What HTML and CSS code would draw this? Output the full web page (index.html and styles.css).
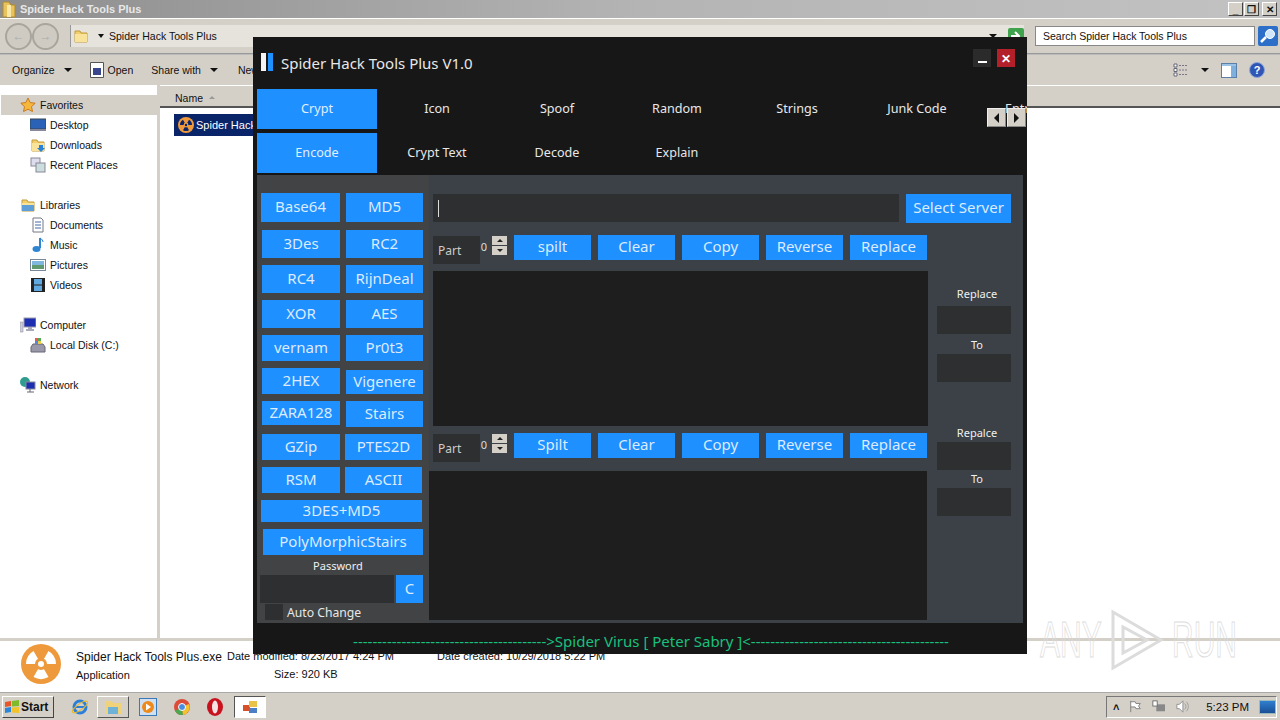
FILE: index.html
```html
<!DOCTYPE html>
<html lang="en">
  <head>
    <meta charset="UTF-8" />
    <meta name="viewport" content="width=device-width, initial-scale=1.0" />
    <title>Spider Hack Tools Plus</title>
    <link rel="stylesheet" href="styles.css">
  </head>
  <body>
    <svg class="defs" width="0" height="0">
      <symbol id="folder" viewBox="0 0 16 16"><path d="M2 3h5l1 2h6v9H2z" fill="#f2cf6a" stroke="#c19a3a"/><path d="M2 6h12v8H2z" fill="#f9e39a"/></symbol>
      <symbol id="radiation" viewBox="0 0 40 40"><circle cx="20" cy="20" r="20" fill="#ee9a3c"/><path class="rad-cut" d="M20 20 27.500 7A15 15 0 0 1 35 20zM20 20 5 20A15 15 0 0 1 12.500 7zM20 20 27.500 33A15 15 0 0 1 12.500 33z"/><circle cx="20" cy="20" r="6" fill="#ee9a3c"/><circle class="rad-cut" cx="20" cy="20" r="3"/></symbol>
    </svg>

    <div class="explorer">
      <header class="caption">
        <svg class="caption__icon" width="14" height="17" viewBox="0 0 14 17"><path d="M1 1h6l2 3h4v12H1z" fill="#e8c25a" stroke="#b08a30"/><path d="M5 4h4v12H5z" fill="#f8e9a8"/></svg>
        <span class="caption__title">Spider Hack Tools Plus</span>
        <div class="caption__btns">
          <span class="capbtn">_</span>
          <span class="capbtn">&#10064;</span>
          <span class="capbtn capbtn--close">&#10005;</span>
        </div>
      </header>

      <div class="addressbar">
        <span class="navbtn">&#8592;</span>
        <span class="navbtn navbtn--next">&#8594;</span>
        <div class="address">
          <svg width="16" height="16"><use href="#folder"/></svg>
          <span class="address__arrow"></span>
          <span>Spider Hack Tools Plus</span>
          <span class="address__drop"></span>
          <svg class="address__go" width="18" height="18" viewBox="0 0 18 18"><rect x="1" y="1" width="16" height="16" rx="2" fill="#3fa34d"/><path d="M4 9h8M8 5l4 4-4 4" fill="none" stroke="#fff" stroke-width="2"/></svg>
        </div>
        <div class="search">Search Spider Hack Tools Plus</div>
        <svg class="search__btn" width="20" height="20" viewBox="0 0 20 20"><rect width="20" height="20" rx="2" fill="#2b6fc9"/><circle cx="12" cy="8" r="4.500" fill="#cfe6fb" stroke="#fff"/><path d="M8 11l-5 5" stroke="#fff" stroke-width="2.500"/></svg>
      </div>

      <nav class="toolbar">
        <span class="tool">Organize<i class="caret"></i></span>
        <span class="tool tool--open">
          <svg width="16" height="18" viewBox="0 0 16 18"><path d="M1.500 1.500h13v15h-13z" fill="#fff" stroke="#555"/><rect x="4" y="7" width="8" height="7" fill="#39458c"/></svg>
          Open
        </span>
        <span class="tool tool--share">Share with<i class="caret"></i></span>
        <span class="tool">New folder</span>
        <div class="toolbar__right">
          <svg width="16" height="14" viewBox="0 0 16 14"><path d="M1 1h3v3H1zM1 5.500h3v3H1zM1 10h3v3H1z" fill="#fff" stroke="#667"/><path d="M6 2.500h9M6 7h9M6 11.500h9" stroke="#778" stroke-dasharray="2 1"/></svg>
          <i class="caret caret--view"></i>
          <svg width="16" height="15" viewBox="0 0 16 15"><rect x=".5" y=".5" width="15" height="14" fill="#fff" stroke="#5b7fa8"/><rect x="1" y="1" width="14" height="2" fill="#9cc2e6"/><rect x="10" y="3" width="5" height="11" fill="#7fb0dd"/></svg>
          <svg width="16" height="16" viewBox="0 0 16 16"><circle cx="8" cy="8" r="7.500" fill="#2f55b5" stroke="#8ea6d8"/><text x="8" y="12" font-size="11" font-weight="700" text-anchor="middle" fill="#fff" font-family="Liberation Sans">?</text></svg>
        </div>
      </nav>

      <div class="browser">
        <aside class="sidebar">
          <div class="tree tree--top tree--active"><svg width="16" height="16" viewBox="0 0 16 16"><path d="M8 1l2.200 4.600 5 .6-3.700 3.400 1 5L8 12.200 3.500 14.600l1-5L.8 6.200l5-.6z" fill="#f5b73c" stroke="#cc7a1f"/></svg>Favorites</div>
          <div class="tree"><svg width="16" height="16" viewBox="0 0 16 16"><rect y="2" width="16" height="10" fill="#2a62b8" stroke="#345"/><rect y="12" width="16" height="2" fill="#889"/></svg>Desktop</div>
          <div class="tree"><svg width="16" height="16"><use href="#folder"/><path d="M9 8h4v3h2l-4 4-4-4h2z" fill="#2a82d8"/></svg>Downloads</div>
          <div class="tree"><svg width="16" height="16" viewBox="0 0 16 16"><rect x="1" y="1" width="9" height="8" fill="#dde" stroke="#889"/><rect x="6" y="6" width="9" height="9" fill="#cdd" stroke="#889"/></svg>Recent Places</div>
          <div class="tree tree--top tree--gap"><svg width="16" height="16"><use href="#folder"/><path d="M2 8h12v6H2z" fill="#5f9fd8"/></svg>Libraries</div>
          <div class="tree"><svg width="16" height="16" viewBox="0 0 16 16"><path d="M3 1h8l2 2v12H3z" fill="#fff" stroke="#778"/><path d="M5 5h6M5 8h6M5 11h6" stroke="#46a"/></svg>Documents</div>
          <div class="tree"><svg width="16" height="16" viewBox="0 0 16 16"><path d="M10 1v10" stroke="#2e86d0" stroke-width="2"/><path d="M10 1c2 1 3 3 3 4" fill="none" stroke="#2e86d0"/><ellipse cx="6.500" cy="12" rx="4" ry="3" fill="#2e86d0"/></svg>Music</div>
          <div class="tree"><svg width="16" height="16" viewBox="0 0 16 16"><rect x=".5" y="2.500" width="15" height="11" fill="#fff" stroke="#789"/><rect x="2" y="4" width="12" height="4" fill="#7fb8dc"/><rect x="2" y="8" width="12" height="4" fill="#5e9a6c"/></svg>Pictures</div>
          <div class="tree"><svg width="16" height="16" viewBox="0 0 16 16"><rect x="1" y="1" width="14" height="14" fill="#222"/><rect x="4" y="2" width="8" height="5.500" fill="#5fa8e0"/><rect x="4" y="8.500" width="8" height="5.500" fill="#5fa8e0"/></svg>Videos</div>
          <div class="tree tree--top tree--gap"><svg width="16" height="16" viewBox="0 0 16 16"><rect x="4" y="1" width="12" height="9" fill="#1d2fb0" stroke="#99a"/><path d="M8 10h4v2h2v2H6v-2h2z" fill="#aab"/><rect y="5" width="3" height="10" fill="#ccd" stroke="#889" stroke-width=".5"/></svg>Computer</div>
          <div class="tree"><svg width="16" height="16" viewBox="0 0 16 16"><path d="M1 10l2-3h10l2 3v5H1z" fill="#99a" stroke="#667"/><rect x="5" y="1" width="3" height="3" fill="#e55"/><rect x="8" y="1" width="3" height="3" fill="#5a5"/><rect x="5" y="4" width="3" height="3" fill="#58d"/><rect x="8" y="4" width="3" height="3" fill="#ec4"/></svg>Local Disk (C:)</div>
          <div class="tree tree--top tree--gap"><svg width="16" height="16" viewBox="0 0 16 16"><circle cx="5" cy="5" r="5" fill="#2f9c8f"/><rect x="6" y="5" width="9" height="7" fill="#1d2fb0" stroke="#889"/><path d="M10 12v3M7 15h7" stroke="#667"/></svg>Network</div>
        </aside>

        <main class="files">
          <div class="files__head"><span>Name</span><i class="sort"></i></div>
          <div class="file">
            <svg width="16" height="16"><use href="#radiation"/></svg>
            <span>Spider Hack Tools Plus.exe</span>
          </div>
        </main>
      </div>

      <footer class="details">
        <svg class="details__icon" width="40" height="40"><use href="#radiation"/></svg>
        <div class="details__name">
          <span class="details__big">Spider Hack Tools Plus.exe</span>
          <span>Application</span>
        </div>
        <div class="details__meta">
          <span>Date modified: 8/23/2017 4:24 PM</span>
          <span class="details__size">Size: 920 KB</span>
        </div>
        <span class="details__created">Date created: 10/29/2018 5:22 PM</span>
      </footer>

      <div class="taskbar">
        <span class="start">
          <svg width="16" height="14" viewBox="0 0 16 14"><path d="M1 2l6-1v5l-6 1z" fill="#e8562a"/><path d="M8 1l7-1v6l-7 .5z" fill="#7fba2a"/><path d="M1 8l6-1v5l-6 1z" fill="#2a86d8"/><path d="M8 7.500l7-.5v6l-7-.5z" fill="#f2c32a"/></svg>
          Start
        </span>
        <svg class="tb tb--ie" width="18" height="18" viewBox="0 0 18 18"><circle cx="9" cy="9" r="6" fill="none" stroke="#2c7fd8" stroke-width="3"/><path d="M3 9h12" stroke="#2c7fd8" stroke-width="2"/><ellipse cx="9" cy="9" rx="9" ry="3" fill="none" stroke="#e8b72a" transform="rotate(-35 9 9)"/></svg>
        <span class="tbbtn"><svg width="20" height="18" viewBox="0 0 20 18"><path d="M2 3h7l1 2h8v11H2z" fill="#f0d27a"/><path d="M5 9h10v7H5z" fill="#6fb2d8"/></svg></span>
        <svg class="tb tb--media" width="18" height="18" viewBox="0 0 18 18"><rect x=".5" y=".5" width="17" height="17" fill="#cfe0f2" stroke="#3a78b8"/><circle cx="9" cy="9" r="6" fill="#ee8a1c"/><path d="M7 5.500l5 3.500-5 3.500z" fill="#fff"/></svg>
        <svg class="tb tb--chrome" width="16" height="16" viewBox="0 0 16 16"><circle cx="8" cy="8" r="8" fill="#dd4b39"/><path d="M8 8L1 12a8 8 0 0 0 8 4z" fill="#4aa84f"/><path d="M8 8l7-3a8 8 0 0 1-6 11z" fill="#f3c32d"/><circle cx="8" cy="8" r="3.500" fill="#4a8de0" stroke="#fff"/></svg>
        <svg class="tb tb--opera" width="16" height="18" viewBox="0 0 16 18"><ellipse cx="8" cy="9" rx="8" ry="9" fill="#c8121e"/><ellipse cx="8" cy="9" rx="3" ry="6.500" fill="#f6e4e4"/></svg>
        <span class="tbbtn tbbtn--active"><svg width="14" height="14" viewBox="0 0 14 14"><rect y="5" width="7" height="6" fill="#d8502a"/><rect x="6" y="1" width="8" height="6" fill="#e8c34a"/><rect x="6" y="8" width="8" height="5" fill="#4a7fc8"/></svg></span>
        <div class="tray">
          <span class="tray__up">&#708;</span>
          <svg width="15" height="15" viewBox="0 0 15 15"><path d="M2 1v13M2 2h5l1 2h5l-2 3 2 3H8L7 8H2" fill="#fff" stroke="#777"/></svg>
          <svg width="16" height="15" viewBox="0 0 16 15"><rect x="5" y="5" width="10" height="8" fill="#888"/><rect x="1" y="1" width="5" height="6" fill="#fff" stroke="#666"/></svg>
          <svg width="16" height="15" viewBox="0 0 16 15"><path d="M1 5h3l4-4v13l-4-4H1z" fill="#fff" stroke="#888"/><path d="M10 4c2 2 2 5 0 7M12 2c3 3 3 8 0 11" fill="none" stroke="#999"/></svg>
          <span class="tray__time">5:23 PM</span>
          <span class="tray__desktop"></span>
        </div>
      </div>
    </div>

    <section class="app">
      <div class="app__title">
        <span class="logo"><i></i><i></i></span>
        <h1>Spider Hack Tools Plus V1.0</h1>
        <span class="winbtn winbtn--min"></span>
        <span class="winbtn winbtn--close">&#10005;</span>
      </div>

      <div class="tabs">
        <span class="tabs__item tabs__item--on">Crypt</span>
        <span class="tabs__item">Icon</span>
        <span class="tabs__item">Spoof</span>
        <span class="tabs__item">Random</span>
        <span class="tabs__item">Strings</span>
        <span class="tabs__item">Junk Code</span>
        <span class="tabs__item tabs__item--cut">Entry</span>
      </div>
      <div class="tabs tabs--sub">
        <span class="tabs__item tabs__item--on">Encode</span>
        <span class="tabs__item">Crypt Text</span>
        <span class="tabs__item">Decode</span>
        <span class="tabs__item">Explain</span>
      </div>
      <div class="scroller"><span class="scroller__left"></span><span class="scroller__right"></span></div>

      <div class="panel">
        <div class="algos">
          <div class="algos__grid">
            <span class="btn algos__top algos__first">Base64</span><span class="btn algos__top">MD5</span>
            <span class="btn">3Des</span><span class="btn">RC2</span>
            <span class="btn">RC4</span><span class="btn">RijnDeal</span>
            <span class="btn">XOR</span><span class="btn">AES</span>
            <span class="btn">vernam</span><span class="btn">Pr0t3</span>
            <span class="btn">2HEX</span><span class="btn algos__vig">Vigenere</span>
            <span class="btn algos__zara">ZARA128</span><span class="btn">Stairs</span>
            <span class="btn">GZip</span><span class="btn algos__shift">PTES2D</span>
            <span class="btn">RSM</span><span class="btn algos__shift">ASCII</span>
            <span class="btn algos__wide">3DES+MD5</span>
            <span class="btn algos__wide algos__poly">PolyMorphicStairs</span>
          </div>
          <div class="small-label algos__pass">Password</div>
          <div class="passrow">
            <span class="field passrow__input"></span>
            <span class="btn passrow__c">C</span>
          </div>
          <div class="check"><i></i>Auto Change</div>
        </div>

        <div class="work">
          <div class="server">
            <span class="field server__input"><i></i></span>
            <span class="btn server__btn">Select Server</span>
          </div>
          <div class="work__body">
            <div class="work__center">
              <div class="actions">
                <div class="part"><span class="part__label">Part</span><span class="part__num">0</span><span class="spin"><i></i><i class="down"></i></span></div>
                <span class="btn">spilt</span><span class="btn">Clear</span><span class="btn">Copy</span><span class="btn">Reverse</span><span class="btn">Replace</span>
              </div>
              <div class="text text--top"></div>
              <div class="actions actions--low">
                <div class="part"><span class="part__label">Part</span><span class="part__num">0</span><span class="spin"><i></i><i class="down"></i></span></div>
                <span class="btn">Spilt</span><span class="btn">Clear</span><span class="btn">Copy</span><span class="btn">Reverse</span><span class="btn">Replace</span>
              </div>
              <div class="text text--bottom"></div>
            </div>
            <div class="side">
              <div class="small-label">Replace</div>
              <span class="field side__input side__input--first"></span>
              <div class="small-label side__to">To</div>
              <span class="field side__input"></span>
              <div class="small-label side__second">Repalce</div>
              <span class="field side__input"></span>
              <div class="small-label side__to side__to--low">To</div>
              <span class="field side__input"></span>
            </div>
          </div>
        </div>
      </div>

      <div class="app__foot">----------------------------------------&gt;Spider Virus [ Peter Sabry ]&lt;-----------------------------------------</div>
    </section>

    <div class="watermark">
      <span>ANY</span>
      <svg width="54" height="62" viewBox="0 0 54 62"><path d="M3 3v56l48-28z M13 18v26l24-13z" fill="none" stroke="#dcdcdc" stroke-width="3"/></svg>
      <span>RUN</span>
    </div>
  </body>
</html>
```

FILE: styles.css
```css
:root {
  --blue: #1e90ff;
  --win: #d4d0c8;
  --dark: #171717;
  --panel: #3b4146;
  --field: #2d2f31;
}
*,
*::before,
*::after {
  box-sizing: border-box;
}
body {
  margin: 0;
  width: 1280px;
  height: 720px;
  overflow: hidden;
  position: relative;
  font-family: "Liberation Sans", sans-serif;
  font-size: 11px;
  color: #111;
  background: #fff;
}
.defs {
  position: absolute;
}
.rad-cut {
  fill: var(--cut, #fff);
}

/* Explorer behind the app */
.explorer {
  display: flex;
  flex-direction: column;
  height: 720px;
}
.caption {
  display: flex;
  align-items: center;
  height: 18px;
  padding-left: 2px;
  background: linear-gradient(90deg, #8e8e8e, #b4b4b4 50%, #c2c2c2);
}
.caption__title {
  margin-left: 4px;
  font-weight: 700;
  color: #e8e8e8;
}
.caption__btns {
  display: flex;
  margin-left: auto;
  margin-right: 3px;
  gap: 1px;
}
.capbtn {
  display: flex;
  align-items: center;
  justify-content: center;
  width: 15px;
  height: 14px;
  font-size: 10px;
  font-weight: 700;
  background: var(--win);
  border: 1px solid;
  border-color: #fff #444 #444 #fff;
}
.capbtn--close {
  margin-left: 2px;
}

.addressbar {
  display: flex;
  align-items: center;
  height: 36px;
  padding: 0 2px 0 5px;
  font-size: 10.5px;
  background: var(--win);
  border-top: 1px solid #fff;
  border-bottom: 1px solid #999;
}
.navbtn {
  display: flex;
  align-items: center;
  justify-content: center;
  width: 27px;
  height: 27px;
  border-radius: 50%;
  color: #aaa;
  font-size: 12px;
  background: #cfcbc3;
  border: 2px solid #a8a59d;
}
.address {
  display: flex;
  align-items: center;
  flex: none;
  width: 954px;
  height: 22px;
  margin-left: 11px;
  padding-left: 2px;
  background: #e6e3dc;
  border-left: 1px solid #999;
}
.address__arrow {
  margin: 0 5px 0 9px;
  border-top: 4px solid #111;
  border-left: 3px solid transparent;
  border-right: 3px solid transparent;
}
.address__drop {
  margin-left: auto;
  margin-right: 10px;
  border-top: 4px solid #111;
  border-left: 4px solid transparent;
  border-right: 4px solid transparent;
}
.address__go {
  margin-right: -1px;
}
.search {
  display: flex;
  align-items: center;
  width: 220px;
  height: 20px;
  margin-left: 11px;
  padding-left: 7px;
  background: #fff;
  border: 1px solid #888;
}
.search__btn {
  margin-left: 3px;
}

.toolbar {
  display: flex;
  align-items: center;
  height: 31px;
  padding-left: 12px;
  font-size: 10.5px;
  background: var(--win);
  border-top: 1px solid #bbb;
}
.tool {
  display: flex;
  align-items: center;
  margin-right: 18px;
  gap: 3px;
}
.tool--open {
  margin-left: -1px;
}
.tool--share {
  margin-right: 20px;
}
.caret {
  display: inline-block;
  margin-left: 6px;
  border-top: 4px solid #111;
  border-left: 4px solid transparent;
  border-right: 4px solid transparent;
}
.toolbar__right {
  display: flex;
  align-items: center;
  margin-left: auto;
  margin-right: 15px;
  gap: 12px;
}
.caret--view {
  margin: 0;
}

.browser {
  display: flex;
  flex: 1;
  min-height: 0;
}
.sidebar {
  width: 160px;
  padding-top: 10px;
  font-size: 10.5px;
  border-right: 3px solid var(--win);
  background: #fff;
}
.tree {
  display: flex;
  align-items: center;
  height: 20px;
  padding-left: 30px;
  gap: 4px;
}
.tree--top {
  padding-left: 20px;
}
.tree--gap {
  margin-top: 20px;
}
.tree--active {
  margin-left: 1px;
  padding-left: 19px;
  background: var(--win);
}
.files {
  flex: 1;
}
.files__head {
  display: flex;
  align-items: center;
  height: 23px;
  padding: 3px 0 0 15px;
  gap: 6px;
  font-size: 10.5px;
  background: var(--win);
  border-bottom: 2px solid #555;
  border-top: 1px solid #fff;
}
.sort {
  border-bottom: 3px solid #999;
  border-left: 3px solid transparent;
  border-right: 3px solid transparent;
}
.file {
  --cut: #0a246a;
  display: flex;
  align-items: center;
  width: 160px;
  height: 22px;
  margin: 6px 0 0 14px;
  padding-left: 4px;
  gap: 2px;
  color: #fff;
  background: #0a246a;
}

.details {
  display: flex;
  height: 54px;
  border-top: 3px solid var(--win);
  background: #fff;
}
.details__icon {
  margin: 3px 0 0 21px;
}
.details__name {
  display: flex;
  flex-direction: column;
  gap: 5px;
  width: 151px;
  margin: 9px 0 0 15px;
}
.details__big {
  font-size: 12px;
}
.details__meta {
  display: flex;
  flex-direction: column;
  gap: 6px;
  width: 210px;
  margin-top: 9px;
}
.details__size {
  margin-left: 47px;
}
.details__created {
  margin-top: 9px;
}

.taskbar {
  display: flex;
  align-items: center;
  height: 28px;
  padding-left: 2px;
  background: var(--win);
  border-top: 1px solid #aaa;
}
.start {
  display: flex;
  align-items: center;
  gap: 1px;
  width: 52px;
  height: 22px;
  padding-left: 1px;
  font-size: 12px;
  font-weight: 700;
  border: 1px solid;
  border-color: #fff #444 #444 #fff;
}
.tb--ie {
  margin-left: 17px;
}
.tbbtn {
  display: flex;
  align-items: center;
  justify-content: center;
  width: 32px;
  height: 22px;
  margin-left: 8px;
  border: 1px solid;
  border-color: #fff #555 #555 #fff;
}
.tb--media {
  margin-left: 10px;
}
.tb--chrome {
  margin-left: 17px;
}
.tb--opera {
  margin-left: 17px;
}
.tbbtn--active {
  margin-left: 11px;
  background: #fff;
  border-color: #555 #fff #fff #555;
}
.tray {
  display: flex;
  align-items: center;
  margin-left: auto;
  margin-right: 3px;
  width: 171px;
  height: 22px;
  padding-left: 6px;
  gap: 10px;
  border: 1px solid;
  border-color: #777 #fff #fff #777;
}
.tray__up {
  font-size: 11px;
  font-weight: 700;
}
.tray__time {
  flex: none;
  margin-left: 6px;
  font-size: 11.5px;
  white-space: nowrap;
}
.tray__desktop {
  flex: none;
  width: 17px;
  height: 14px;
  background: linear-gradient(#2f7fd0, #1b4f96);
  border: 1px solid #9bb;
}

/* The app window floating over explorer */
.app {
  position: absolute;
  left: 253px;
  top: 37px;
  width: 774px;
  height: 617px;
  display: flex;
  flex-direction: column;
  color: #e8e8e8;
  font-family: "Noto Sans", sans-serif;
  background: var(--dark);
}
.app__title {
  display: flex;
  align-items: center;
  height: 52px;
  padding: 0 12px 0 8px;
}
.logo {
  display: flex;
  gap: 2px;
  margin-right: 8px;
  margin-top: -2px;
}
.logo i {
  width: 5px;
  height: 18px;
  background: #f4f4f4;
}
.logo i + i {
  background: var(--blue);
}
.app__title h1 {
  flex: 1;
  margin: 0;
  font-size: 15px;
  font-weight: 400;
}
.winbtn {
  display: flex;
  align-self: flex-start;
  align-items: center;
  justify-content: center;
  width: 18px;
  height: 18px;
  margin-left: 6px;
  margin-top: 12px;
  font-size: 12px;
  font-weight: 700;
  color: #fff;
  background: #2b2b2b;
}
.winbtn--min::before {
  content: "";
  width: 9px;
  height: 2px;
  margin-top: 7px;
  background: #fff;
}
.winbtn--close {
  background: #b4202a;
}
.tabs {
  display: flex;
  height: 40px;
  padding-left: 4px;
  overflow: hidden;
}
.tabs--sub {
  margin-top: 4px;
}
.tabs__item {
  display: flex;
  flex: none;
  align-items: center;
  justify-content: center;
  width: 120px;
  height: 40px;
  padding-bottom: 2px;
  font-size: 12.6px;
}
.tabs__item--on {
  color: #e2efff;
  background: var(--blue);
}
.tabs__item--cut {
  width: 60px;
  justify-content: flex-start;
  padding-left: 28px;
}
.scroller {
  position: absolute;
  left: 734px;
  top: 71px;
  display: flex;
}
.scroller span {
  display: flex;
  align-items: center;
  justify-content: center;
  width: 19px;
  height: 19px;
  margin-right: 1px;
  background: var(--win);
  border: 1px solid;
  border-color: #eee #888 #888 #eee;
}
.scroller__left::before,
.scroller__right::before {
  content: "";
  border-top: 5px solid transparent;
  border-bottom: 5px solid transparent;
}
.scroller__left::before {
  border-right: 5px solid #111;
}
.scroller__right::before {
  border-left: 5px solid #111;
}

.panel {
  display: flex;
  height: 448px;
  margin: 2px 4px 0;
  background: var(--panel);
}
.btn {
  display: flex;
  align-items: center;
  justify-content: center;
  padding-bottom: 3px;
  font-size: 15px;
  color: #dcebff;
  background: var(--blue);
  white-space: nowrap;
}
.algos {
  width: 172px;
  padding: 18px 0 0 5px;
  background: #414345;
}
.algos__grid {
  display: grid;
  grid-template-columns: 78px 77px;
  grid-template-rows: 30px 28px 28px 28px 26px 26px 26px 26px 26px 22px 26px;
  column-gap: 6px;
  row-gap: 7px;
}
.algos__top {
  height: 29px;
}
.algos__first {
  margin-left: -1px;
}
.algos__vig {
  margin-top: 2px;
}
.algos__zara {
  margin-bottom: 2px;
}
.algos__shift {
  margin: 0 1px 0 -1px;
}
.algos__wide {
  grid-column: span 2;
  margin-left: -1px;
  margin-right: 1px;
}
.algos__poly {
  margin-left: 1px;
  margin-right: 0;
}
.small-label {
  text-align: center;
  font-size: 11px;
  line-height: 14px;
  color: #f0f0f0;
}
.algos__pass {
  margin-top: 4px;
  width: 152px;
}
.passrow {
  display: flex;
  gap: 2px;
  margin: 2px 0 0 -2px;
}
.field {
  display: block;
  background: var(--field);
}
.passrow__input {
  width: 134px;
  height: 28px;
}
.passrow__c {
  width: 27px;
  height: 28px;
}
.check {
  display: flex;
  align-items: center;
  height: 18px;
  gap: 4px;
  font-size: 12.2px;
}
.check i {
  width: 18px;
  height: 16px;
  margin-left: 3px;
  background: var(--field);
}

.work {
  flex: 1;
  padding-top: 19px;
  min-width: 0;
}
.server {
  display: flex;
  gap: 7px;
  margin-left: 4px;
}
.server__input {
  display: flex;
  align-items: center;
  width: 466px;
  height: 28px;
  padding-left: 5px;
}
.server__input i {
  width: 1px;
  height: 17px;
  background: #ddd;
}
.server__btn {
  width: 105px;
  height: 29px;
}
.work__body {
  display: flex;
}
.work__center {
  width: 499px;
}
.actions {
  display: flex;
  align-items: flex-start;
  height: 36px;
  margin-top: 12px;
  padding-left: 4px;
  gap: 7px;
}
.actions .btn {
  width: 77px;
  height: 25px;
}
.actions--low {
  margin-top: 7px;
}
.part {
  display: flex;
  align-items: flex-start;
  width: 74px;
  height: 28px;
  margin-top: 1px;
}
.part__label {
  display: flex;
  align-items: center;
  width: 47px;
  height: 28px;
  padding: 0 0 0 5px;
  font-size: 12px;
  color: #ccc;
  background: var(--field);
}
.part__num {
  width: 7px;
  font-size: 11px;
  line-height: 21px;
  text-align: right;
  color: #ddd;
}
.spin {
  display: flex;
  flex-direction: column;
  gap: 1px;
  margin-left: 5px;
}
.spin i {
  display: flex;
  align-items: center;
  justify-content: center;
  width: 15px;
  height: 9px;
  background: var(--win);
}
.spin i::before {
  content: "";
  border-bottom: 3px solid #222;
  border-left: 3px solid transparent;
  border-right: 3px solid transparent;
}
.spin .down::before {
  border-bottom: 0;
  border-top: 3px solid #222;
}
.text {
  background: #1e1e1e;
}
.text--top {
  width: 495px;
  height: 155px;
  margin-left: 4px;
}
.text--bottom {
  width: 498px;
  height: 149px;
  margin-top: 2px;
}
.side {
  width: 74px;
  margin: 64px 0 0 9px;
}
.side .small-label {
  margin-left: 6px;
}
.side__input {
  height: 28px;
  margin-top: 2px;
}
.side__input--first {
  margin-top: 5px;
}
.side__to {
  margin-top: 4px;
}
.side__to--low {
  margin-top: 2px;
}
.side__second {
  margin-top: 44px;
}

.app__foot {
  flex: 1;
  padding: 8px 0 0 22px;
  text-align: center;
  font-size: 15px;
  color: #18c07e;
  white-space: nowrap;
}

/* any.run mark in the corner */
.watermark {
  position: absolute;
  left: 1040px;
  top: 609px;
  display: flex;
  align-items: center;
  gap: 8px;
  color: transparent;
  font-size: 50px;
  line-height: 62px;
  -webkit-text-stroke: 1px #dcdcdc;
  pointer-events: none;
}
.watermark span {
  width: 62px;
  transform: scaleX(0.6);
  transform-origin: left center;
  white-space: nowrap;
}
```
